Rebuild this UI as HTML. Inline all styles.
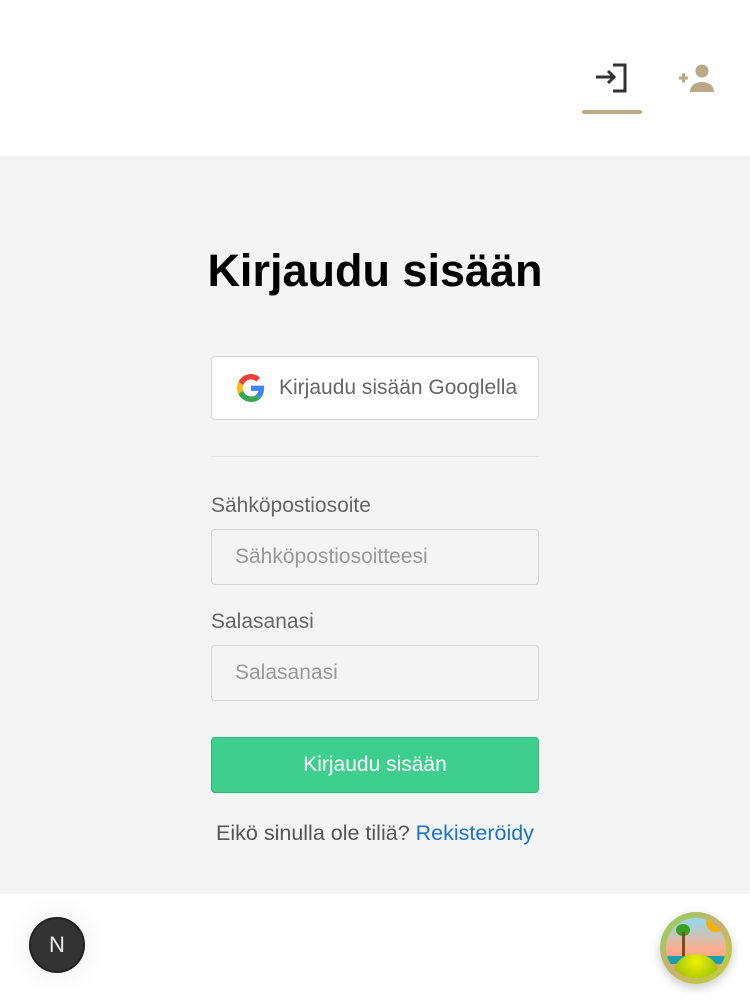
<!DOCTYPE html>
<html><head><meta charset="utf-8"><style>
*{box-sizing:border-box;margin:0;padding:0}
body{width:750px;height:1002px;background:#fff;font-family:"Liberation Sans",sans-serif;position:relative;overflow:hidden}
.top{height:156px;position:relative}
.main{position:absolute;top:156px;left:0;width:750px;height:738px;background:#f4f4f4}
h1{position:absolute;top:89px;width:100%;text-align:center;font-size:45px;font-weight:bold;color:#000}
.g{position:absolute;left:211px;top:200px;width:328px;height:64px;background:#fff;border:1px solid #d6d6d6;border-radius:4px;display:flex;align-items:center;padding-left:25px;font-size:21px;color:#666}
.g svg{margin-right:14px}
.hr{position:absolute;left:211px;top:300px;width:328px;height:1px;background:#e4e4e4}
.lab{position:absolute;left:211px;font-size:21px;color:#666}
.in{position:absolute;left:211px;width:328px;height:56px;border:1px solid #d6d6d6;border-radius:4px;background:#f4f4f4;font-size:21px;color:#999;padding-left:23px;line-height:54px}
.btn{position:absolute;left:211px;top:581px;width:328px;height:56px;background:#3ecf8e;border:1px solid #30b97c;border-radius:4px;color:#fff;font-size:21px;text-align:center;line-height:54px}
.reg{position:absolute;top:665px;width:100%;text-align:center;font-size:21.5px;color:#555}
.reg span{color:#1a73d2}
</style></head><body>
<div class="top">
<svg style="position:absolute;left:596px;top:63px" width="32" height="30" viewBox="0 0 32 30"><path d="M0 14h18M12 8l6 6-6 6" fill="none" stroke="#333" stroke-width="3"/><path d="M17 2h12v26H17" fill="none" stroke="#333" stroke-width="3"/></svg>
<div style="position:absolute;left:582px;top:110px;width:60px;height:4px;border-radius:2px;background:#b8aa85"></div>
<svg style="position:absolute;left:679px;top:64px" width="36" height="28" viewBox="0 0 36 28"><path d="M0 14h9M4.5 9.5v9" stroke="#b8aa85" stroke-width="3"/><circle cx="23" cy="7" r="6.5" fill="#b8aa85"/><path d="M11 28c0-7 6-10 12-10s12 3 12 10z" fill="#b8aa85"/></svg>
</div>
<div class="main">
<h1>Kirjaudu sisään</h1>
<div class="g"><svg width="28" height="28" viewBox="0 0 48 48"><path fill="#EA4335" d="M24 9.5c3.5 0 6.6 1.2 9 3.5l6.7-6.7C35.6 2.4 30.2 0 24 0 14.6 0 6.6 5.4 2.7 13.3l7.8 6C12.4 13.7 17.7 9.5 24 9.5z"/><path fill="#4285F4" d="M46.5 24.5c0-1.6-.1-3.1-.4-4.5H24v9h12.7c-.6 3-2.3 5.5-4.8 7.2l7.6 5.9c4.4-4.1 7-10.1 7-17.6z"/><path fill="#FBBC05" d="M10.5 28.7A14.5 14.5 0 0 1 9.5 24c0-1.6.3-3.2.8-4.7l-7.8-6A24 24 0 0 0 0 24c0 3.9.9 7.5 2.6 10.7l7.9-6z"/><path fill="#34A853" d="M24 48c6.5 0 11.9-2.1 15.9-5.8l-7.6-5.9c-2.1 1.4-4.9 2.300-8.3 2.3-6.3 0-11.6-4.2-13.5-10l-7.9 6C6.6 42.6 14.6 48 24 48z"/></svg>Kirjaudu sisään Googlella</div>
<div class="hr"></div>
<div class="lab" style="top:338px">Sähköpostiosoite</div>
<div class="in" style="top:373px">Sähköpostiosoitteesi</div>
<div class="lab" style="top:454px">Salasanasi</div>
<div class="in" style="top:489px">Salasanasi</div>
<div class="btn">Kirjaudu sisään</div>
<div class="reg">Eikö sinulla ole tiliä? <span>Rekisteröidy</span></div>
</div>
<div style="position:absolute;left:29px;top:917px;width:56px;height:56px;border-radius:50%;background:#333;border:2px solid #222;box-shadow:0 0 30px rgba(0,0,0,.08);color:#eee;font-size:22px;text-align:center;line-height:52px">N</div>
<div style="position:absolute;left:660px;top:912px;width:72px;height:72px;border-radius:50%;background:linear-gradient(135deg,#8fd45c,#c9b070,#b8d82a);box-shadow:0 4px 10px rgba(0,0,0,.2)">
<div style="position:absolute;left:6px;top:6px;width:60px;height:60px;border-radius:50%;overflow:hidden;background:linear-gradient(#8fdcf0,#f8b090 50%,#f79080)">
<div style="position:absolute;left:0;top:38px;width:60px;height:8px;background:#1a9fb0"></div>
<div style="position:absolute;left:8px;top:36px;width:44px;height:36px;border-radius:50%;background:radial-gradient(circle at 50% 20%,#f0f000,#6aa800)"></div>
<div style="position:absolute;left:40px;top:-6px;width:20px;height:20px;border-radius:50%;background:#f8b000"></div>
<div style="position:absolute;left:10px;top:6px;width:14px;height:12px;border-radius:50%;background:#3aa020"></div>
<div style="position:absolute;left:16px;top:14px;width:3px;height:24px;background:#7a4a20"></div>
</div></div>
</body></html>
